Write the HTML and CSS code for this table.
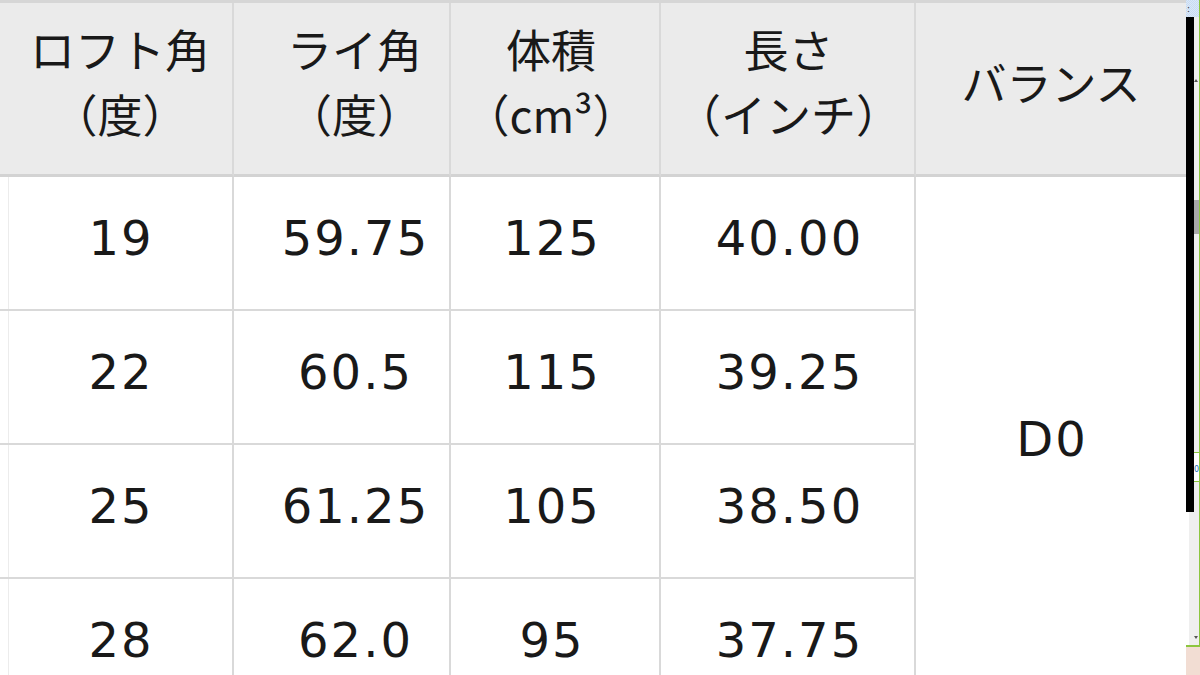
FILE: index.html
```html
<!DOCTYPE html>
<html lang="ja">
<head>
<meta charset="utf-8">
<title>スペック表</title>
<link rel="stylesheet" href="styles.css">
</head>
<body>
<div class="screen">
  <div class="sheet">
    <table class="spec">
      <thead>
        <tr>
          <th class="c1">ロフト角<br>（度）</th>
          <th class="c2">ライ角<br>（度）</th>
          <th class="c3">体積<br>（cm³）</th>
          <th class="c4">長さ<br>（インチ）</th>
          <th class="c5">バランス</th>
        </tr>
      </thead>
      <tbody>
        <tr>
          <td class="c1">19</td>
          <td class="c2">59.75</td>
          <td class="c3">125</td>
          <td class="c4">40.00</td>
          <td class="c5" rowspan="4">D0</td>
        </tr>
        <tr>
          <td class="c1">22</td>
          <td class="c2">60.5</td>
          <td class="c3">115</td>
          <td class="c4">39.25</td>
        </tr>
        <tr>
          <td class="c1">25</td>
          <td class="c2">61.25</td>
          <td class="c3">105</td>
          <td class="c4">38.50</td>
        </tr>
        <tr>
          <td class="c1">28</td>
          <td class="c2">62.0</td>
          <td class="c3">95</td>
          <td class="c4">37.75</td>
        </tr>
      </tbody>
    </table>
  </div>
  <div class="strip">
    <div class="strip-top"><span class="dots">:</span></div>
    <div class="strip-mid">
      <div class="edge">
        <div class="edge-bar"></div>
        <div class="edge-rest"></div>
      </div>
      <div class="track">
        <div class="arrow-up"></div>
        <div class="thumb"></div>
        <div class="mark">0</div>
        <div class="arrow-down"></div>
      </div>
    </div>
    <div class="strip-bottom"></div>
  </div>
</div>
</body>
</html>
```

FILE: styles.css
```css
html, body {
  margin: 0;
  padding: 0;
  height: 675px;
  overflow: hidden;
  background: #ffffff;
}

.screen {
  display: flex;
  width: 1200px;
  height: 675px;
  overflow: hidden;
}

.sheet {
  width: 1186px;
  flex: none;
  height: 675px;
  overflow: hidden;
}

.spec {
  border-collapse: separate;
  border-spacing: 0;
  table-layout: fixed;
  width: 1186px;
  border-top: 3px solid #d6d6d6;
  color: #191919;
}

.spec th,
.spec td {
  box-sizing: border-box;
  border-right: 2px solid #d9d9d9;
  border-bottom: 2px solid #d9d9d9;
  text-align: center;
  vertical-align: middle;
  padding: 0;
}

.spec th {
  height: 174px;
  background: #ebebeb;
  border-bottom: 3px solid #d3d3d3;
  font-family: "Noto Sans CJK JP", "DejaVu Sans", sans-serif;
  font-weight: 400;
  font-size: 45px;
  line-height: 65px;
  padding-bottom: 15px;
}

.spec td {
  height: 134px;
  font-family: "DejaVu Sans", "Noto Sans CJK JP", sans-serif;
  font-size: 48px;
  letter-spacing: 2px;
  line-height: 56px;
  padding-bottom: 10px;
  background: #ffffff;
}

.spec .c1 { width: 234px; padding-left: 10px; }
.spec .c2 { width: 217px; padding-left: 28px; }
.spec .c3 { width: 210px; padding-right: 6px; }
.spec .c4 { width: 255px; padding-left: 4px; }
.spec .c5 { width: 270px; border-right: none; }

.spec th.c1 { padding-left: 8px; }
.spec th.c2 { padding-left: 26px; }
.spec th.c3 { padding-right: 8px; }
.spec th.c4 { padding-left: 2px; }

.spec td.c1 {
  background: linear-gradient(to right, transparent 8px, #ececec 8px, #ececec 9px, transparent 9px), #ffffff;
}

.spec td.c5 {
  padding-bottom: 0;
  padding-left: 2px;
  vertical-align: top;
  padding-top: 234px;
}

/* right-hand window strip */
.strip {
  width: 14px;
  min-width: 14px;
  flex: none;
  height: 675px;
  display: flex;
  flex-direction: column;
}

.strip-top {
  height: 17px;
  flex: none;
  box-sizing: border-box;
  border-right: 1px solid #8cc63f;
  background: repeating-conic-gradient(#dbe8f8 0 25%, #c8dbf2 0 50%) 0 0 / 2px 2px;
}

.dots {
  display: block;
  font-family: "DejaVu Sans", sans-serif;
  font-size: 9px;
  line-height: 9px;
  color: #333;
  padding: 5px 0 0 1px;
}

.strip-mid {
  height: 628px;
  flex: none;
  box-sizing: border-box;
  display: flex;
  border-right: 1px solid #8cc63f;
}

.edge {
  width: 8px;
  min-width: 8px;
  flex: none;
  display: flex;
  flex-direction: column;
}

.edge-bar {
  height: 495px;
  flex: none;
  background: #000000;
}

.edge-rest {
  flex: 1;
  background: linear-gradient(to right, #ffffff 3px, #efefef 3px);
}

.track {
  flex: 1;
  background: #efefef;
  display: flex;
  flex-direction: column;
  align-items: flex-end;
}

.arrow-up {
  margin-top: 62px;
  margin-right: 1px;
  width: 0;
  height: 0;
  border-left: 2px solid transparent;
  border-right: 2px solid transparent;
  border-bottom: 3px solid #555;
}

.thumb {
  margin-top: 118px;
  width: 5px;
  height: 34px;
  background: #a9a9a9;
}

.mark {
  margin-top: 218px;
  align-self: stretch;
  height: 30px;
  box-sizing: border-box;
  border-top: 1px solid #8cc63f;
  border-bottom: 1px solid #8cc63f;
  background: #ffffff;
  font-family: "DejaVu Sans", sans-serif;
  font-size: 8px;
  line-height: 8px;
  color: #1a6fb5;
  text-align: left;
  padding: 13px 0 0 0;
  overflow: hidden;
}

.arrow-down {
  margin-top: auto;
  margin-bottom: 6px;
  margin-right: 1px;
  width: 0;
  height: 0;
  border-left: 2px solid transparent;
  border-right: 2px solid transparent;
  border-top: 3px solid #555;
}

.strip-bottom {
  flex: 1;
  background: #f2ddd3;
  border-top: 2px solid #8cc63f;
}
```
